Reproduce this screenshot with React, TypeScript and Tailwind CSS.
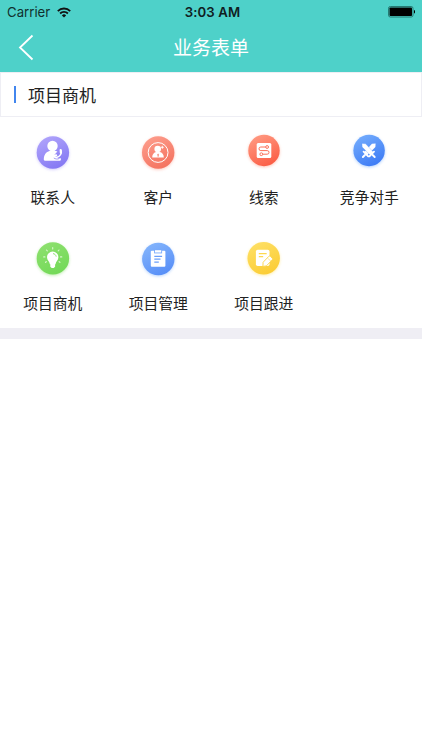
import type { ReactNode } from "react";

interface Entry {
  id: string;
  label: string;
  from: string;
  to: string;
  cx: number;
  cy: number;
  r: number;
  glyph: ReactNode;
}

const entries: Entry[] = [
  {
    id: "contact",
    label: "联系人",
    from: "#b0a4fb",
    to: "#8478f3",
    cx: 24.9,
    cy: 24.5,
    r: 16.2,
    glyph: (
      <>
        <circle cx="24.5" cy="18" r="5.2" fill="#fff" />
        <path
          d="M15.8 31.500c0-4.800 2.400-7.800 5.700-8.600h6.400c.6.200 1 .4 1.500.7l-3.400 3.600c.8 2.200 3.300 3.200 6.800 3.100.2.600.1 1.200 0 1.600 0 .5-.4.800-.9.800H16.800c-.6 0-1-.5-1-1.200z"
          fill="#fff"
        />
        <path
          d="M33 22.500c1 3-.8 6-3.900 6.700-1.200.3-2.400 0-3.200-.8"
          fill="none"
          stroke="#fff"
          strokeWidth="1.400"
        />
        <path
          d="M32.700 22l.2 2.600M25.800 28l2.300-.6"
          stroke="#fff"
          strokeWidth="2.200"
          strokeLinecap="round"
        />
        <path d="M25.800 30c1.500 1.100 3.700 1.400 5.600.5" fill="none" stroke="#9388f5" strokeWidth=".8" />
      </>
    ),
  },
  {
    id: "customer",
    label: "客户",
    from: "#fd9d8c",
    to: "#f4725f",
    cx: 25.2,
    cy: 24.5,
    r: 16.2,
    glyph: (
      <g transform="translate(.6 0)">
        <circle cx="24.500" cy="24.500" r="9.900" fill="none" stroke="#fff" strokeWidth="1" />
        <circle cx="24.100" cy="21" r="3.300" fill="#fff" />
        <path d="M18.600 29.600c0-3.200 1.800-5.200 4-5.500h3.600c2.200.3 4 2.300 4 5.500z" fill="#fff" />
        <path d="M24.500 25.400l.7 1-.3 2.300h-.8l-.3-2.300z" fill="#f47e6c" />
        <path d="M28.700 17.800v3M27.200 19.300h3" stroke="#fff" strokeWidth=".9" />
      </g>
    ),
  },
  {
    id: "clue",
    label: "线索",
    from: "#ff9a82",
    to: "#fb5c44",
    cx: 25,
    cy: 22.5,
    r: 15.7,
    glyph: (
      <>
        <rect x="17.700" y="15" width="14.600" height="15" rx="1.500" fill="#fff" />
        <g fill="none" stroke="#fb7059" strokeWidth="1">
          <circle cx="28.100" cy="19" r="1.400" />
          <circle cx="22.300" cy="26.200" r="1.400" />
          <path d="M26.700 19h-4.900a1.800 1.800 0 0 0 0 3.600h6.400a1.800 1.800 0 0 1 0 3.600h-4.500" />
        </g>
      </>
    ),
  },
  {
    id: "competitor",
    label: "竞争对手",
    from: "#73acfd",
    to: "#3d7bf5",
    cx: 25.1,
    cy: 22.5,
    r: 15.7,
    glyph: (
      <g fill="#fff" transform="translate(.3 .4)">
        <path d="M31.300 15l-.2 3.700-8.400 8.400-3.100-3.100 8.100-8.600z" />
        <path d="M17.700 15l.2 3.700 8.400 8.400 3.100-3.100-8.100-8.600z" stroke="#5a97fa" strokeWidth=".3" />
        <path
          d="M19.300 23.300l4.600 4.600M29.700 23.300l-4.600 4.600M20.600 26.600l-2 2M28.400 26.600l2 2"
          stroke="#fff"
          strokeWidth="1.900"
          strokeLinecap="round"
        />
      </g>
    ),
  },
  {
    id: "opportunity",
    label: "项目商机",
    from: "#8ee06f",
    to: "#72d957",
    cx: 24.9,
    cy: 24.4,
    r: 16.2,
    glyph: (
      <>
        <path
          d="M24.700 17.500a5.700 5.700 0 0 1 5.700 5.700c0 2.900-2.500 4-2.900 7h-5.600c-.4-3-2.900-4.100-2.900-7a5.700 5.700 0 0 1 5.700-5.700z"
          fill="#fff"
        />
        <path d="M22.300 30h4.800v2.800l-1.400 1.100h-2l-1.400-1.100z" fill="#fff" />
        <path d="M25 19.600c1.700.2 2.900 1.400 3.200 3" fill="none" stroke="#83dc68" strokeWidth=".9" />
        <path
          d="M24.700 13.600v1.300M18.500 16l.8.900M31 16l-.8.900M15.700 22.900h1.200M32.500 22.900h1.300M17.500 28.300l.8-.6M31.900 28.300l-.8-.6"
          stroke="#d9f6cd"
          strokeWidth="1.100"
          strokeLinecap="round"
        />
      </>
    ),
  },
  {
    id: "management",
    label: "项目管理",
    from: "#84b5fc",
    to: "#578ef7",
    cx: 25.3,
    cy: 25,
    r: 16.2,
    glyph: (
      <g transform="translate(.6 0)">
        <rect x="17.200" y="16.700" width="14.600" height="16" rx="1" fill="#fff" />
        <path d="M20.500 16h8v3.400h-8z" fill="#7aabfb" />
        <path d="M21.400 16.200h6.200v2.300h-6.200z" fill="#fff" />
        <path d="M20.700 22.300h7.800M20.700 25.200h6.200M20.700 28.200h4.500" stroke="#6b9ffa" strokeWidth="1.200" />
      </g>
    ),
  },
  {
    id: "follow",
    label: "项目跟进",
    from: "#fee065",
    to: "#fbcc34",
    cx: 24.7,
    cy: 24.3,
    r: 16.2,
    glyph: (
      <>
        <rect x="16.900" y="15.800" width="13.600" height="16.200" rx="1.800" fill="#fff" />
        <path d="M20.300 19.700h6.900M20.300 22.700h3.400" stroke="#fdd84e" strokeWidth="1.200" strokeLinecap="round" />
        <path
          d="M24.100 28.300l5.500-5.800c.6-.6 1.400-.6 2 0l1.500 1.500c.6.600.6 1.400 0 2l-5.700 5.900-3.500.5z"
          fill="#fff"
          stroke="#fcd246"
          strokeWidth=".9"
        />
        <path d="M28.900 24.300l2.700 2.700" stroke="#fcd246" strokeWidth=".6" />
      </>
    ),
  },
];

function EntryIcon({ entry }: { entry: Entry }) {
  const { id, from, to, cx, cy, r, glyph } = entry;
  return (
    <svg width="50" height="50" viewBox="0 0 50 50" aria-hidden="true">
      <defs>
        <linearGradient id={`${id}-fill`} x1="0.2" y1="0" x2="0.7" y2="1">
          <stop offset="0" stopColor={from} />
          <stop offset="1" stopColor={to} />
        </linearGradient>
        <filter id={`${id}-glow`} x="-30%" y="-30%" width="160%" height="160%">
          <feGaussianBlur stdDeviation="1.6" />
        </filter>
      </defs>
      <circle cx={cx} cy={cy + 1} r={r} fill={from} opacity="0.55" filter={`url(#${id}-glow)`} />
      <circle cx={cx} cy={cy} r={r} fill={`url(#${id}-fill)`} />
      {glyph}
    </svg>
  );
}

function StatusBar() {
  return (
    <div className="grid h-6 grid-cols-3 items-center px-[7px] text-[#10302e]">
      <div className="flex items-center gap-[7px]">
        <span className="text-[13.2px] leading-6">Carrier</span>
        <svg width="14" height="11" viewBox="0 0 14 11" fill="none" stroke="#111" strokeWidth="1.800">
          <path d="M.8 4.100a8.700 8.700 0 0 1 12.400 0M3.100 6.500a5.500 5.500 0 0 1 7.800 0" />
          <path d="M7 10.600L4.900 8.400a3 3 0 0 1 4.200 0z" fill="#111" stroke="none" />
        </svg>
      </div>
      <span className="pl-[3px] text-center text-[13.2px] leading-6 font-semibold tracking-[0.1px] text-[#10201f]">
        3:03 AM
      </span>
      <svg className="justify-self-end" width="28" height="12" viewBox="0 0 28 12">
        <rect x="1.500" y=".5" width="24.500" height="10.500" rx="1.800" fill="none" stroke="#257a73" />
        <rect x="2.500" y="1.500" width="22.500" height="8.500" rx=".8" fill="#000" />
        <path d="M27 4c1.500.4 1.500 3.100 0 3.500z" fill="#000" />
      </svg>
    </div>
  );
}

export default function App() {
  return (
    <div className="min-h-screen w-full bg-white font-['Inter','Noto_Sans_CJK_SC',sans-serif] text-[#222]">
      {/* Header */}
      <header className="h-[72px] bg-[#4ed1c9]">
        <StatusBar />
        <div className="grid h-12 grid-cols-[48px_1fr_48px] items-center">
          <button className="flex h-12 items-center pl-[18px]" aria-label="返回">
            <svg width="16" height="28" viewBox="0 0 16 28" fill="none" stroke="#fff" strokeWidth="1.800">
              <path d="M14.500 1.500L2 13.500l12.500 12" />
            </svg>
          </button>
          <h1 className="pt-0.5 text-center text-[19px] leading-7 text-white">业务表单</h1>
        </div>
      </header>

      <main>
        {/* Section title */}
        <div className="flex h-[45px] items-center gap-3 border border-[#eeeef4] pl-[13px]">
          <span className="h-[17px] w-[2px] bg-[#4286ee]" />
          <h2 className="pt-0.5 text-[17px] leading-6">项目商机</h2>
        </div>

        {/* Entries */}
        <div className="grid grid-cols-4 gap-y-4 pt-px pb-3.5">
          {entries.map((entry) => (
            <button key={entry.id} className="flex flex-col items-center gap-2.5 pt-2.5">
              <EntryIcon entry={entry} />
              <span className="text-[14.800px] leading-5">{entry.label}</span>
            </button>
          ))}
        </div>
        <div className="h-[11px] bg-[#efeef4]" />
      </main>
    </div>
  );
}
